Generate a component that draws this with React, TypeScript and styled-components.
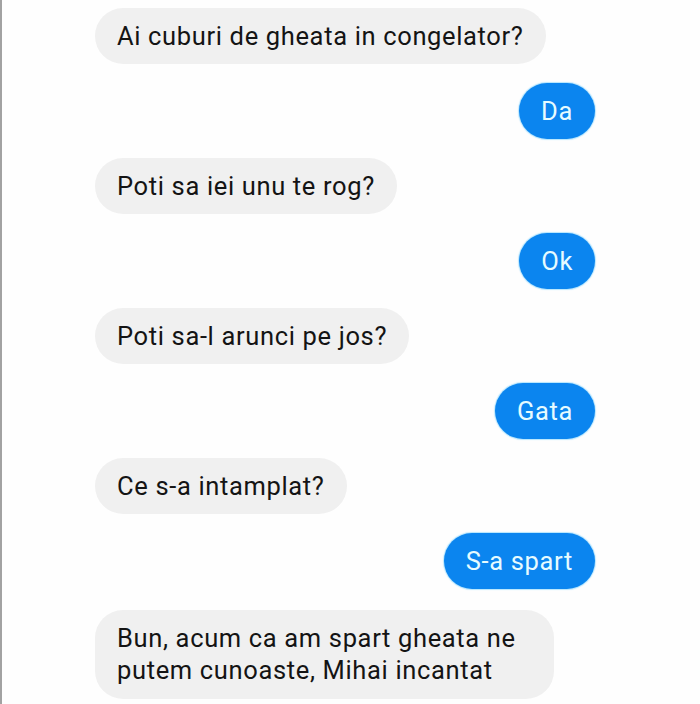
import React from "react";
import styled, { createGlobalStyle } from "styled-components";

const GlobalStyle = createGlobalStyle`
  html, body {
    margin: 0;
    padding: 0;
    background: #ffffff;
  }
  body {
    font-family: Roboto, "Noto Sans", "Liberation Sans", sans-serif;
  }
`;

const Page = styled.div`
  width: 700px;
  height: 704px;
  box-sizing: border-box;
  border-left: 2px solid #a2a2a2;
  background: #fefefe;
  overflow: hidden;
`;

const Thread = styled.div`
  display: flex;
  flex-direction: column;
  gap: 19px;
  padding: 8px 105px 0 93px;
`;

const Row = styled.div<{ mine?: boolean }>`
  display: flex;
  justify-content: ${({ mine }) => (mine ? "flex-end" : "flex-start")};
`;

const Bubble = styled.div<{ mine?: boolean }>`
  box-sizing: border-box;
  min-height: 56px;
  display: flex;
  align-items: center;
  padding: 0 22px;
  border-radius: 28px;
  font-size: 25.5px;
  line-height: 32px;
  letter-spacing: 0.65px;
  background: ${({ mine }) => (mine ? "#0b85ef" : "#f0f0f0")};
  color: ${({ mine }) => (mine ? "#e6fbff" : "#141414")};
  box-shadow: ${({ mine }) => (mine ? "0 0 1px 1px rgba(90, 200, 255, 0.45)" : "none")};
`;

const LongBubble = styled(Bubble)`
  margin-top: 2px;
  padding: 12px 38px 13px 22px;
  max-width: 470px;
  white-space: pre-line;
`;

const messages = [
  { text: "Ai cuburi de gheata in congelator?", mine: false },
  { text: "Da", mine: true },
  { text: "Poti sa iei unu te rog?", mine: false },
  { text: "Ok", mine: true },
  { text: "Poti sa-l arunci pe jos?", mine: false },
  { text: "Gata", mine: true },
  { text: "Ce s-a intamplat?", mine: false },
  { text: "S-a spart", mine: true },
];

const App = () => {
  return (
    <>
      <GlobalStyle />
      <Page>
        <Thread>
          {messages.map((m, i) => (
            <Row key={i} mine={m.mine}>
              <Bubble mine={m.mine}>{m.text}</Bubble>
            </Row>
          ))}
          <Row>
            <LongBubble>
              {"Bun, acum ca am spart gheata ne\nputem cunoaste, Mihai incantat"}
            </LongBubble>
          </Row>
        </Thread>
      </Page>
    </>
  );
};

export default App;
